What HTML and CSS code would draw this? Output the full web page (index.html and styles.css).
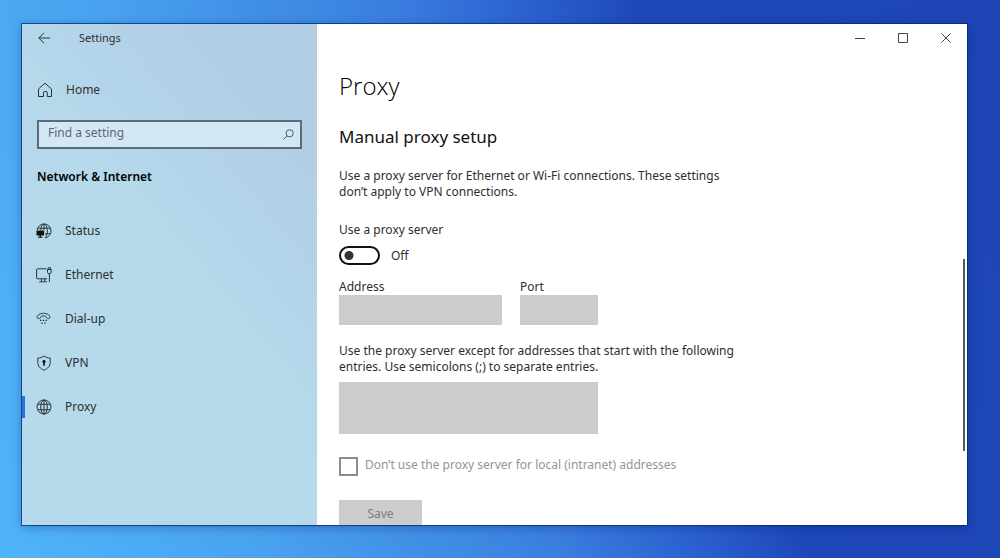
FILE: index.html
```
<!DOCTYPE html>
<html lang="en">
<head>
  <meta charset="UTF-8">
  <meta name="viewport" content="width=device-width, initial-scale=1.0">
  <title>Settings</title>
  <link rel="stylesheet" href="styles.css">
</head>
<body>

  <div class="window">

    <!-- Sidebar -->
    <aside class="sidebar">
      <header class="app-bar">
        <button type="button" class="back" aria-label="Back">
          <svg width="12" height="12" viewBox="0 0 12 12"><path d="M12 6H.8M6 .8L.8 6 6 11.2"/></svg>
        </button>
        <span class="app-title">Settings</span>
      </header>

      <a href="#" class="home">
        <svg width="16" height="16" viewBox="0 0 16 16"><path d="M1.500 7L8 1.200 14.500 7v7.500h-4.200v-3.700q0-1.300-1.300-1.300H7.800q-1.300 0-1.300 1.300v3.700h-5z" stroke-linejoin="round"/></svg>
        Home
      </a>

      <form class="search">
        <input type="text" placeholder="Find a setting" aria-label="Find a setting">
        <button type="submit" aria-label="Search">
          <svg width="11" height="11" viewBox="0 0 11 11"><circle cx="6.700" cy="4.300" r="3.600"/><path d="M4.100 6.900L.6 10.400"/></svg>
        </button>
      </form>

      <h2 class="group">Network &amp; Internet</h2>

      <nav class="menu">
        <a href="#">
          <svg width="16" height="16" viewBox="0 0 16 16">
            <path d="M1.100 7A7 7 0 1 1 9.500 14.800M8 1v6M4.700 7C4.900 3.500 6.200 1.300 8 1c1.900.3 3.300 3.300 3.300 7 0 3-.8 5.600-2.300 6.800M1.900 5.200h12.200M9 10.800h5.300"/>
            <path class="solid" d="M.5 7.500h7.600v5H5v1.300h1.500v1H2v-1h1.500v-1.300h-3z"/>
          </svg>
          Status
        </a>
        <a href="#">
          <svg width="16" height="16" viewBox="0 0 16 16">
            <path d="M10.500 1.800H1.500Q.6 1.800.6 2.700v8.200q0 .9.900.9h9.500M5.400 12v2.500M8.800 12v2.500M3.300 14.800h7.600M13.400 7v8M11.500 2.500h3.700v2.700l-.9 1.500h-1.900l-.9-1.500zM12.200 2.500V.8h2.300v1.700"/>
          </svg>
          Ethernet
        </a>
        <a href="#">
          <svg width="16" height="16" viewBox="0 0 16 16">
            <path d="M1.200 6.200C1.200 3.700 4.300 2.300 7.500 2.300s6.300 1.400 6.300 3.900c0 1-.6 1.400-1.500 1.400-1 0-1.800-.4-1.900-1.200C10.200 5.300 9.200 5 7.500 5s-2.700.3-2.900 1.400c-.1.800-.9 1.200-1.900 1.200-.9 0-1.500-.4-1.500-1.400z"/>
            <path class="solid" d="M4.200 8.700h1.200v1.200H4.200zM6.900 8.700h1.200v1.200H6.900zM9.600 8.700h1.200v1.200H9.600zM5.400 11.500h1.200v1.200H5.400zM8.400 11.500h1.200v1.200H8.400z"/>
          </svg>
          Dial-up
        </a>
        <a href="#">
          <svg width="16" height="16" viewBox="0 0 16 16">
            <path d="M8 1c1.700 1.300 3.700 2 6.200 2.100v4.500c0 3.300-2.200 5.800-6.200 7.600-4-1.800-6.200-4.300-6.200-7.600V3.100C4.300 3 6.300 2.300 8 1z"/>
            <path class="solid" d="M8 5a1.600 1.600 0 0 1 .8 3v2.800H7.200V8A1.600 1.600 0 0 1 8 5z"/>
          </svg>
          VPN
        </a>
        <a href="#" class="active" aria-current="page">
          <svg width="16" height="16" viewBox="0 0 16 16">
            <circle cx="8" cy="8" r="7"/><ellipse cx="8" cy="8" rx="3.300" ry="7"/><path d="M8 1v14M1.900 5.300h12.200M1.900 10.700h12.200"/>
          </svg>
          Proxy
        </a>
      </nav>
    </aside>

    <!-- Page -->
    <main class="page">
      <div class="window-buttons">
        <button type="button" aria-label="Minimize">
          <svg width="10" height="10" viewBox="0 0 10 10"><path d="M0 5.500h10"/></svg>
        </button>
        <button type="button" aria-label="Maximize">
          <svg width="10" height="10" viewBox="0 0 10 10"><path d="M.5.5h9v9h-9z"/></svg>
        </button>
        <button type="button" aria-label="Close">
          <svg width="10" height="10" viewBox="0 0 10 10"><path d="M.5.5l9 9M9.500.5l-9 9"/></svg>
        </button>
      </div>

      <form class="content">
        <h1>Proxy</h1>
        <h2>Manual proxy setup</h2>
        <p>Use a proxy server for Ethernet or Wi-Fi connections. These settings don’t apply to VPN connections.</p>

        <label class="toggle-label" for="useProxy">Use a proxy server</label>
        <div class="toggle">
          <input type="checkbox" id="useProxy" role="switch">
          <span>Off</span>
        </div>

        <div class="fields">
          <div class="field address">
            <label for="address">Address</label>
            <input type="text" id="address" disabled>
          </div>
          <div class="field port">
            <label for="port">Port</label>
            <input type="text" id="port" disabled>
          </div>
        </div>

        <div class="field exceptions">
          <label for="exceptions">Use the proxy server except for addresses that start with the following entries. Use semicolons (;) to separate entries.</label>
          <textarea id="exceptions" disabled></textarea>
        </div>

        <div class="check">
          <input type="checkbox" id="local" disabled>
          <label for="local">Don’t use the proxy server for local (intranet) addresses</label>
        </div>

        <button type="submit" class="save" disabled>Save</button>
      </form>

      <div class="scroll-thumb"></div>
    </main>

  </div>

</body>
</html>
```
FILE: styles.css
```
* {
  box-sizing: border-box;
}

body {
  margin: 0;
  height: 100vh;
  padding: 24px 33px 33px 22px;
  overflow: hidden;
  font-family: "Noto Sans", "Open Sans", sans-serif;
  font-size: 12px;
  line-height: 16px;
  color: #2e2e2e;
  background: linear-gradient(73deg, #50b4fa 0%, #4aa3f0 22%, #4090e6 36%, #3a7ee0 48%, #2a5fd0 60%, #1e48ba 69%, #1d45b6 100%);
}

h1,
h2,
p {
  margin: 0;
}

a {
  color: inherit;
  text-decoration: none;
}

button,
input,
textarea {
  margin: 0;
  padding: 0;
  border: none;
  border-radius: 0;
  background: none;
  font: inherit;
  color: inherit;
}

button {
  cursor: pointer;
}

svg {
  display: block;
  flex: none;
  fill: none;
  stroke: #2c3338;
}

svg .solid {
  fill: #111;
  stroke: none;
}

.window {
  display: flex;
  height: 100%;
  overflow: hidden;
  background: #fff;
  box-shadow: 0 0 0 1px rgba(0, 45, 120, 0.75), 0 2px 10px rgba(0, 20, 80, 0.35);
}

/* Sidebar */
.sidebar {
  flex: 0 0 295px;
  background: linear-gradient(50deg, #b6d9ec 0%, #b5d8eb 55%, #b2cfe6 80%, #b2cee5 100%);
}

.app-bar {
  display: flex;
  align-items: center;
  gap: 29px;
  height: 28px;
  padding-left: 16px;
}

.app-title {
  font-size: 11px;
}

.home {
  display: flex;
  align-items: center;
  gap: 13px;
  height: 32px;
  margin-top: 22px;
  padding-left: 15px;
}

.search {
  display: flex;
  align-items: center;
  height: 29px;
  margin: 14px 15px 0;
  padding-right: 6px;
  border: 2px solid #5b6c78;
  background: #d3e7f5;
}

.search input {
  flex: 1;
  min-width: 0;
  height: 100%;
  padding: 0 9px 4px;
  outline: none;
}

.search input::placeholder {
  color: #5a6872;
  opacity: 1;
}

.search svg {
  stroke: #4b5a64;
}

.group {
  margin: 20px 15px 0;
  font-size: 12px;
  font-weight: 600;
  color: #000;
}

.menu {
  margin-top: 24px;
}

.menu a {
  position: relative;
  display: flex;
  align-items: center;
  gap: 13px;
  height: 44px;
  padding-left: 14px;
}

.menu .active::before {
  content: "";
  position: absolute;
  left: 0;
  top: 11px;
  width: 3px;
  height: 22px;
  background: #2a72d8;
}

/* Page */
.page {
  position: relative;
  flex: 1;
  min-width: 0;
}

.window-buttons {
  display: flex;
  justify-content: flex-end;
  height: 28px;
}

.window-buttons button {
  display: flex;
  align-items: center;
  justify-content: center;
  width: 43px;
}

.window-buttons svg {
  stroke: #444;
}

.content {
  max-width: 450px;
  padding: 18px 22px 0;
}

.content h1 {
  font-family: "Open Sans", "Noto Sans", sans-serif;
  font-size: 24px;
  font-weight: 300;
  line-height: 32px;
  color: #000;
}

.content h2 {
  margin-top: 23px;
  font-size: 17px;
  font-weight: 400;
  line-height: 24px;
  color: #111;
}

.content p {
  margin-top: 19px;
}

.toggle-label {
  display: block;
  margin-top: 22px;
}

.toggle {
  display: flex;
  align-items: center;
  gap: 11px;
  margin-top: 8px;
}

.toggle input {
  appearance: none;
  width: 41px;
  height: 19px;
  border: 2px solid #111;
  border-radius: 10px;
  background: radial-gradient(circle at 8px 50%, #333 4px, transparent 5px);
}

.fields {
  display: flex;
  gap: 18px;
  margin-top: 14px;
}

.field label {
  display: block;
}

.field input,
.field textarea {
  display: block;
  width: 100%;
  height: 30px;
  background: #ccc;
}

.address {
  width: 163px;
}

.port {
  width: 78px;
}

.exceptions {
  margin-top: 18px;
}

.exceptions textarea {
  width: 259px;
  height: 52px;
  margin-top: 7px;
  resize: none;
}

.check {
  display: flex;
  gap: 7px;
  margin-top: 23px;
  color: #949494;
}

.check input {
  appearance: none;
  width: 19px;
  height: 19px;
  border: 2px solid #8c8c8c;
}

.save {
  width: 83px;
  height: 28px;
  margin-top: 24px;
  background: #ccc;
  color: #7c7c7c;
}

.scroll-thumb {
  position: absolute;
  right: 2px;
  top: 47%;
  width: 2px;
  height: 192px;
  background: #55585c;
}
```
